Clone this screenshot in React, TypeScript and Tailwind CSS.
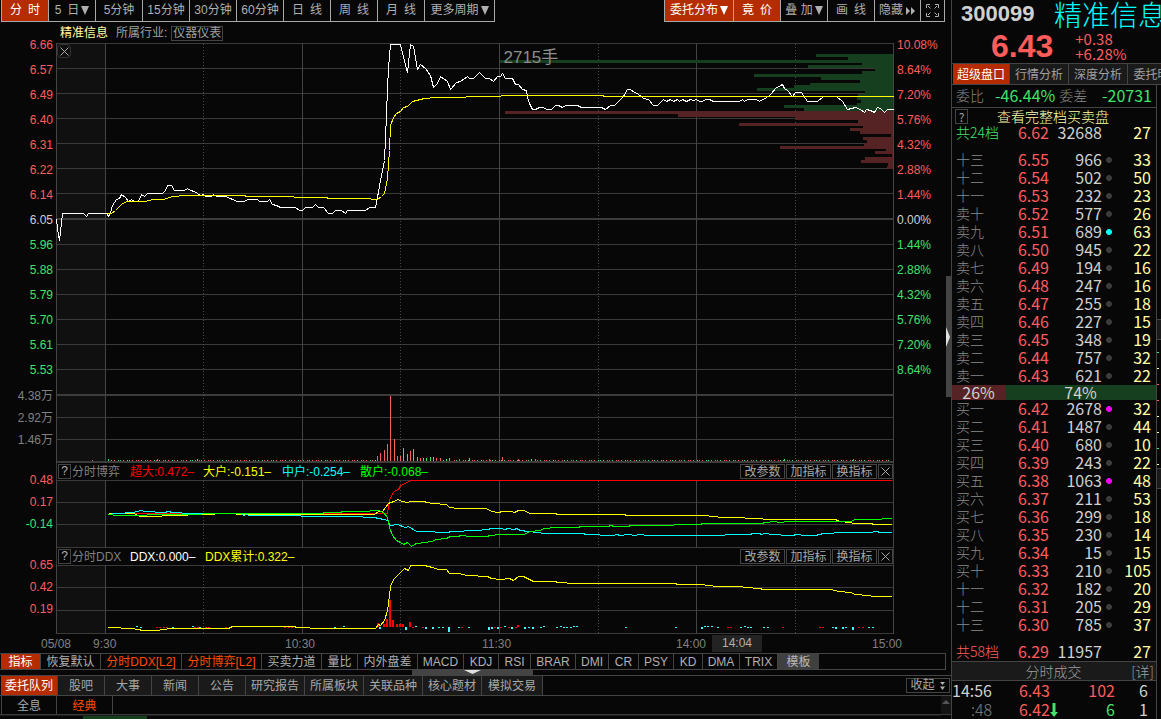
import React from "react";

type Pt = string;

const RED = "#ff5c5c";
const GREEN = "#3fe36b";

const PERIODS = ["5分钟", "15分钟", "30分钟", "60分钟", "日\u2002线", "周\u2002线", "月\u2002线"];

const PRICE_AXIS = ["6.66", "6.57", "6.49", "6.40", "6.31", "6.22", "6.14", "6.05", "5.96", "5.88", "5.79", "5.70", "5.61", "5.53"];
const PERCENT_AXIS = ["10.08%", "8.64%", "7.20%", "5.76%", "4.32%", "2.88%", "1.44%", "0.00%", "1.44%", "2.88%", "4.32%", "5.76%", "7.20%", "8.64%"];
const VOLUME_AXIS = ["4.38万", "2.92万", "1.46万"];

const SOLID_X = [56, 105, 302, 499, 696, 893];
const DOTTED_X = [203, 400, 598, 795];

const PRICE_LINE: Pt =
  "56,219 57,228 59,240 61,222 62,213 83,213 86,216 88,213 106,213 108,216 110,212 112,205 116,199 119,198 121,194 125,197 128,201 131,199 134,201 138,201 141,194 144,196 147,193 162,193 165,190 167,185 171,185 174,190 184,190 187,188 190,190 194,191 200,195 203,194 205,196 211,196 213,194 216,196 226,196 229,198 233,199 236,201 244,201 247,199 257,199 259,201 267,201 269,199 272,204 276,205 280,207 295,207 299,210 302,210 305,207 312,207 315,204 318,207 323,207 328,213 332,213 335,210 341,210 345,213 347,210 365,210 369,207 375,207 377,197 380,180 384,160 386,115 387,87 388,68 390,44 400,44 403,57 407,72 410,44 413,46 417,69 420,64 425,68 430,75 433,87 437,83 440,76 447,81 450,89 456,82 460,81 467,76 469,78 473,78 479,72 485,78 489,78 493,81 497,76 500,76 502,73 505,78 512,78 515,84 518,84 522,89 526,90 527,97 529,103 532,109 535,109 539,107 543,107 546,109 551,109 555,105 558,105 562,107 565,105 577,105 581,107 601,107 605,109 610,105 614,105 619,100 623,96 627,89 630,89 634,92 637,93 643,98 648,99 653,105 657,105 663,99 666,101 670,99 673,101 677,99 679,101 682,99 686,101 690,99 693,100 696,99 699,101 702,101 705,99 709,99 713,101 739,101 742,99 744,101 747,99 756,99 759,101 762,99 767,97 771,93 775,88 782,84 784,88 787,90 792,96 795,92 801,92 807,101 817,101 823,96 836,96 842,101 847,109 855,107 860,109 864,112 866,109 870,110 874,112 877,107 880,108 884,112 887,109 893,109";
const AVERAGE_LINE: Pt =
  "106,213 111,213 115,210 121,204 126,201 145,201 152,199 163,199 172,196 186,195 244,195 246,196 292,196 295,197 326,197 328,198 369,198 372,199 377,199 381,196 384,193 387,178 389,150 390,125 393,117 396,113 400,111 403,107 407,106 412,101 424,98 436,97 465,97 466,96 500,96 501,95 602,95 604,96 893,96";

const DEPTH_TOP = 54;
const DEPTH_STEP = 2.86;
const SELL_DEPTH = [816, 848, 500, 862, 808, 875, 862, 754, 821, 860, 810, 794, 757, 865, 858, 857, 861, 857, 784, 804];
const BUY_DEPTH = [505, 678, 795, 858, 739, 863, 850, 860, 891, 863, 867, 864, 780, 886, 875, 892, 865, 861, 888, 887];

const VOLUME: [number, number, "r" | "g"][] = [
  [92, 1, "r"], [108, 2, "g"], [157, 2, "r"], [197, 2, "g"], [377, 5, "r"], [380, 8, "r"], [384, 11, "r"], [387, 17, "r"], [390, 65, "r"],
  [394, 22, "r"], [397, 5, "r"], [400, 5, "r"], [403, 13, "g"], [407, 7, "g"], [410, 10, "r"], [413, 12, "g"], [417, 4, "g"], [420, 3, "r"],
  [423, 3, "g"], [426, 3, "g"], [430, 4, "g"], [433, 4, "g"], [436, 3, "r"], [440, 3, "r"], [443, 1, "g"], [446, 2, "g"], [449, 3, "g"],
  [459, 2, "r"], [469, 3, "g"], [489, 2, "r"], [502, 4, "r"], [518, 2, "r"], [531, 2, "g"], [535, 2, "r"], [784, 2, "g"], [853, 2, "r"],
];

const MINOR_VOLUME = Array.from({ length: 260 }, (_, i) => 111 + i * 3)
  .filter((x) => (x < 376 || x > 452) && x < 889)
  .map((x, i) => ({ x: x + (i % 3 === 2 ? 1 : 0), green: i % 4 === 2 || i % 11 === 5 || i % 17 === 3 }));

const GAME_RED: Pt = "108,513 387,513 389,500 392,493 395,490 398,489 400,485 405,483 410,480 891,480";
const GAME_YELLOW: Pt =
  "108,513 133,513 140,516 158,516 165,515 175,515 200,514 230,513 240,514 374,514 378,511 382,511 385,507 388,503 390,502 394,501 397,499 402,501 407,502 410,501 424,501 426,502 433,503 446,504 449,507 458,508 486,508 491,511 498,512 502,511 511,511 514,512 518,510 523,510 530,513 555,513 557,514 624,514 626,515 700,515 716,516 719,517 743,517 746,518 761,518 764,519 835,519 839,521 850,522 853,523 871,523 873,524 891,524";
const GAME_CYAN: Pt =
  "108,514 116,513 133,512 140,510 145,511 164,512 168,511 172,512 190,513 240,513 243,515 246,514 249,515 350,516 374,517 378,518 384,519 387,520 390,525 397,524 405,527 408,526 416,531 433,531 436,532 448,532 450,531 477,530 487,529 491,528 500,528 505,529 507,528 514,529 516,528 520,530 536,532 544,533 583,533 585,534 613,535 616,534 620,535 627,534 635,535 638,534 648,535 723,535 726,534 749,534 753,533 759,533 761,534 764,533 773,534 787,535 793,535 795,534 806,535 815,535 823,533 845,532 870,532 875,531 881,532 891,532";
const GAME_GREEN: Pt =
  "108,514 117,515 145,515 148,514 165,514 240,513 322,513 324,512 340,512 342,511 368,511 371,510 378,510 383,512 387,517 389,527 392,535 396,540 400,542 403,544 407,542 411,546 416,543 425,542 431,541 436,539 446,538 450,536 458,536 460,535 470,536 487,536 489,535 500,534 523,534 530,531 539,530 544,528 556,527 578,527 580,526 608,526 610,525 614,526 628,526 630,525 672,525 675,524 700,524 702,523 762,523 764,522 775,521 778,522 790,521 850,521 855,519 880,519 883,518 891,518";

const DDX_LINE: Pt =
  "108,627 132,628 137,629 143,630 158,630 161,629 172,628 228,628 232,626 294,626 296,627 322,628 375,628 378,624 380,625 384,620 387,610 389,595 390,586 393,579 400,572 404,568 408,570 410,565 424,565 432,567 438,569 446,569 449,573 458,573 467,575 487,576 491,578 500,579 509,578 513,580 518,576 523,576 533,581 555,581 557,582 575,583 675,583 677,584 700,584 717,586 740,586 745,587 760,588 762,589 831,589 838,591 850,592 855,594 868,595 873,596 891,596";
const DDX_UP: [number, number][] = [[377, 4], [383, 3], [386, 8], [389, 27], [392, 7], [396, 3], [399, 3], [402, 3], [409, 5], [517, 2]];
const DDX_RED_DOTS = [156, 159, 163, 166, 194, 197, 205, 208, 225, 284, 288, 291, 412, 422, 461, 494, 500, 508, 515, 727, 730, 782, 819, 822, 858, 862];
const DDX_CYAN_DOTS: [number, number, number][] = [
  [136, 626, 1], [140, 627, 1], [172, 627, 1], [192, 626, 1], [199, 627, 1], [334, 627, 1], [343, 626, 1], [379, 627, 2], [405, 627, 3],
  [415, 626, 1], [425, 627, 2], [432, 627, 2], [438, 627, 1], [442, 627, 1], [448, 627, 5], [458, 627, 1], [468, 627, 1], [488, 627, 3],
  [491, 627, 2], [497, 627, 2], [504, 626, 1], [511, 627, 2], [524, 627, 2], [528, 627, 1], [532, 627, 2], [540, 627, 1], [543, 626, 1],
  [556, 627, 1], [560, 626, 1], [563, 627, 1], [566, 627, 1], [570, 627, 1], [573, 626, 1], [576, 626, 1], [625, 627, 1], [675, 627, 1],
  [701, 627, 2], [704, 626, 1], [707, 626, 1], [711, 626, 1], [717, 627, 1], [740, 627, 1], [744, 626, 1], [747, 627, 1], [750, 627, 1],
  [763, 627, 1], [767, 627, 1], [832, 627, 1], [835, 627, 2], [842, 627, 2], [845, 627, 1], [852, 627, 3], [868, 627, 1], [872, 627, 1],
];

const INDICATORS: [string, string, string][] = [
  ["恢复默认", "w-[60px]", "text-[#b0b0b0]"],
  ["分时DDX[L2]", "w-[81px]", "text-[#ff4a00]"],
  ["分时博弈[L2]", "w-20", "text-[#ff4a00]"],
  ["买卖力道", "w-[60px]", "text-[#b0b0b0]"],
  ["量比", "w-9", "text-[#b0b0b0]"],
  ["内外盘差", "w-[60px]", "text-[#b0b0b0]"],
  ["MACD", "w-[46px]", "text-[#b0b0b0]"],
  ["KDJ", "w-[35px]", "text-[#b0b0b0]"],
  ["RSI", "w-8", "text-[#b0b0b0]"],
  ["BRAR", "w-[45px]", "text-[#b0b0b0]"],
  ["DMI", "w-[33px]", "text-[#b0b0b0]"],
  ["CR", "w-[30px]", "text-[#b0b0b0]"],
  ["PSY", "w-[35px]", "text-[#b0b0b0]"],
  ["KD", "w-[29px]", "text-[#b0b0b0]"],
  ["DMA", "w-[37px]", "text-[#b0b0b0]"],
  ["TRIX", "w-[38px]", "text-[#b0b0b0]"],
];

const NEWS_TABS: [string, string][] = [
  ["股吧", "w-[47px]"],
  ["大事", "w-[47px]"],
  ["新闻", "w-[47px]"],
  ["公告", "w-[47px]"],
  ["研究报告", "w-[59px]"],
  ["所属板块", "w-[59px]"],
  ["关联品种", "w-[59px]"],
  ["核心题材", "w-[59px]"],
  ["模拟交易", "w-[61px]"],
];

type Row = [string, string, string, string, string?];
const SELLS: Row[] = [
  ["十三", "6.55", "966", "33"], ["十二", "6.54", "502", "50"], ["十一", "6.53", "232", "23"], ["卖十", "6.52", "577", "26"],
  ["卖九", "6.51", "689", "63", "#00ffff"], ["卖八", "6.50", "945", "22"], ["卖七", "6.49", "194", "16"], ["卖六", "6.48", "247", "16"],
  ["卖五", "6.47", "255", "18"], ["卖四", "6.46", "227", "15"], ["卖三", "6.45", "348", "19"], ["卖二", "6.44", "757", "32"],
  ["卖一", "6.43", "621", "22"],
];
const BUYS: Row[] = [
  ["买一", "6.42", "2678", "32", "#ff00ff"], ["买二", "6.41", "1487", "44"], ["买三", "6.40", "680", "10"], ["买四", "6.39", "243", "22"],
  ["买五", "6.38", "1063", "48", "#ff00ff"], ["买六", "6.37", "211", "53"], ["买七", "6.36", "299", "18"], ["买八", "6.35", "230", "14"],
  ["买九", "6.34", "15", "15"], ["买十", "6.33", "210", "105"], ["十一", "6.32", "182", "20"], ["十二", "6.31", "205", "29"],
  ["十三", "6.30", "785", "37"],
];

function Down() {
  return (
    <svg width="8" height="9" viewBox="0 0 8 9" fill="currentColor" className="shrink-0">
      <path d="M0 0h8L4 9z" />
    </svg>
  );
}

function ToolButton({ children, className = "w-[47px]", active = false }: { children: React.ReactNode; className?: string; active?: boolean }) {
  return (
    <button
      className={`flex h-[22px] shrink-0 items-center justify-center gap-0.5 border-r border-b border-[#a8a8a8] leading-[21px] whitespace-nowrap ${className} ${
        active ? "bg-[#b42c00] text-white" : "text-[#b0b0b0]"
      }`}
    >
      {children}
    </button>
  );
}

function Polyline({ points, color }: { points: Pt; color: string }) {
  return <polyline points={points} fill="none" stroke={color} strokeWidth="1" transform="translate(0.5 0.5)" vectorEffect="non-scaling-stroke" />;
}

function Pane({ top, height, lines, thick = [], className, label, children }: {
  top: number;
  height: number;
  lines: number[];
  thick?: number[];
  className: string;
  label: string;
  children: React.ReactNode;
}) {
  return (
    <svg
      role="img"
      aria-label={label}
      viewBox={`56 ${top} 838 ${height}`}
      preserveAspectRatio="none"
      shapeRendering="crispEdges"
      className={`block w-full ${className}`}
    >
      <rect x="57" y={top} width="48" height={height} fill="#101010" />
      {lines.map((y) => (
        <rect key={y} x="56" y={y} width="838" height="1" fill="#3a3a3a" />
      ))}
      {thick.map((y) => (
        <rect key={y} x="56" y={y} width="838" height="2" fill="#3c3c3c" />
      ))}
      {SOLID_X.map((x) => (
        <rect key={x} x={x} y={top} width="1" height={height} fill="#444444" />
      ))}
      {DOTTED_X.map((x) => (
        <line key={x} x1={x + 0.5} x2={x + 0.5} y1={top + 1} y2={top + height} stroke="#4a4a4a" strokeDasharray="1 2" />
      ))}
      {children}
    </svg>
  );
}

function Cross() {
  return (
    <svg width="9" height="9" viewBox="0 0 9 9" stroke="#a8a8a8" fill="none">
      <path d="M0.5 0.5l8 8M8.5 0.5l-8 8" />
    </svg>
  );
}

function PaneHeader({ name, children }: { name: string; children: React.ReactNode }) {
  return (
    <div className="flex h-[17px] items-center justify-between border-x border-[#3a3a3a] pl-px leading-[15px] whitespace-nowrap">
      <div className="flex items-center">
        <button aria-label="帮助" className="flex h-[15px] w-[13px] items-center justify-center border border-[#444] text-[#b0b0b0]">?</button>
        <span className="w-[59px] pt-px pl-px text-[#808080]">{name}</span>
        <div className="flex pt-px">{children}</div>
      </div>
      <div className="flex gap-px text-[#a8a8a8]">
        {["改参数", "加指标", "换指标"].map((t) => (
          <button key={t} className="h-[15px] w-[45px] border border-[#444] leading-[15px]">{t}</button>
        ))}
        <button aria-label="关闭" className="flex h-[15px] w-[15px] items-center justify-center border border-[#444]"><Cross /></button>
      </div>
    </div>
  );
}

function QuoteRow({ row, total }: { row: Row; total?: string }) {
  const [label, price, volume, count, dot] = row;
  return (
    <tr className="h-[18px]">
      <th scope="row" className={`p-0 pl-1 text-left align-top text-sm leading-4 font-light whitespace-nowrap ${total ?? "text-[#8a8a8a]"}`}>{label}</th>
      <td className="p-0 text-right align-top text-[#ff5c5c]">{price}</td>
      <td className="p-0 text-right align-top text-[#d0d0d0]">{volume}</td>
      <td className="p-0 align-middle">
        {!total && (
          <svg width="6" height="6" viewBox="0 0 6 6" className="mx-auto block">
            <path d="M2 0h2l2 2v2l-2 2h-2l-2-2v-2z" fill={dot ?? "#3c3c3c"} />
          </svg>
        )}
      </td>
      <td className="p-0 pr-[5px] text-right align-top text-[#ffffa6]">{count}</td>
    </tr>
  );
}

function QuoteTable({ label, children }: { label: string; children: React.ReactNode }) {
  return (
    <table aria-label={label} className="w-full table-fixed border-collapse text-base leading-4">
      <colgroup>
        <col className="w-[51px]" />
        <col className="w-[46px]" />
        <col className="w-[53px]" />
        <col className="w-[14px]" />
        <col />
      </colgroup>
      <tbody>{children}</tbody>
    </table>
  );
}

function AxisLabel({ text, className }: { text: string; className: string }) {
  return <div className={`flex items-center ${className}`}>{text}</div>;
}

function LeftAxis() {
  return (
    <div className="w-14 shrink-0 pt-[9px] pr-[3px] text-[#808080]">
      {PRICE_AXIS.map((t, i) => (
        <AxisLabel key={t} text={t} className={`h-[25px] justify-end ${i < 7 ? "text-[#ff5c5c]" : i === 7 ? "text-[#d0d0d0]" : "text-[#3fe36b]"}`} />
      ))}
      <div className="pt-[3px]">
        {VOLUME_AXIS.map((t) => (
          <AxisLabel key={t} text={t} className="h-[22px] justify-end" />
        ))}
      </div>
      <div className="pt-[18px] text-[#ff5c5c]">
        <AxisLabel text="0.48" className="h-[22px] justify-end" />
        <AxisLabel text="0.17" className="h-[22px] justify-end" />
        <AxisLabel text="-0.14" className="h-[22px] justify-end text-[#3fe36b]" />
      </div>
      <div className="pt-[19px] text-[#ff5c5c]">
        {["0.65", "0.42", "0.19"].map((t) => (
          <AxisLabel key={t} text={t} className="h-[22px] justify-end" />
        ))}
      </div>
    </div>
  );
}

function RightAxis() {
  return (
    <div className="w-[57px] shrink-0 pt-[9px] pl-[3px]">
      {PERCENT_AXIS.map((t, i) => (
        <AxisLabel key={i} text={t} className={`h-[25px] ${i < 7 ? "text-[#ff5c5c]" : i === 7 ? "text-[#d0d0d0]" : "text-[#3fe36b]"}`} />
      ))}
    </div>
  );
}

function Charts() {
  return (
    <div className="min-w-0 flex-1">
      <div className="flex h-5 items-center gap-2 pl-1 leading-[15px] whitespace-nowrap">
        <span className="text-[#ffffa6]">精准信息</span>
        <span className="flex items-center gap-1 text-[#a0a0a0]">
          所属行业:
          <a href="#industry" className="border border-[#444] px-px leading-[13px]">仪器仪表</a>
        </span>
      </div>

      <div className="relative">
        <Pane
          label="分时走势"
          top={43}
          height={420}
          className="h-[420px]"
          lines={[43, 68, 93, 118, 143, 168, 193, 244, 269, 294, 319, 344, 369, 417, 439]}
          thick={[218, 394, 461]}
        >
          {SELL_DEPTH.map((x, i) => (
            <rect key={i} x={x} y={Math.round(DEPTH_TOP + i * DEPTH_STEP)} width={893 - x} height="3" fill="#153f1f" />
          ))}
          {BUY_DEPTH.map((x, i) => (
            <rect key={i} x={x} y={Math.round(DEPTH_TOP + (i + 20) * DEPTH_STEP)} width={893 - x} height="3" fill="#552323" />
          ))}
          <Polyline points={PRICE_LINE} color="#ffffff" />
          <Polyline points={AVERAGE_LINE} color="#ffff00" />
          {MINOR_VOLUME.map(({ x, green }) => (
            <rect key={x} x={x} y="460" width="1" height="1" fill={green ? GREEN : RED} />
          ))}
          {VOLUME.map(([x, h, c]) => (
            <rect key={x} x={x} y={461 - h} width="1" height={h} fill={c === "g" ? GREEN : RED} />
          ))}
        </Pane>
        <button aria-label="关闭走势" className="absolute top-px left-px flex h-3.5 w-3.5 items-center justify-center rounded-sm border border-[#333]"><Cross /></button>
        <span className="absolute top-1 left-[53.4%] text-[17px] leading-[22px] text-[#8c8c8c]">2715手</span>
      </div>

      <PaneHeader name="分时博弈">
        <span className="w-[73px] text-[#ff0000]">超大:0.472–</span>
        <span className="w-[79px] text-[#ffff00]">大户:-0.151–</span>
        <span className="w-[78px] text-[#00ffff]">中户:-0.254–</span>
        <span className="text-[#00ff00]">散户:-0.068–</span>
      </PaneHeader>
      <Pane label="分时博弈" top={480} height={68} className="h-[68px]" lines={[480, 502, 524, 547]}>
        <Polyline points={GAME_RED} color="#ff0000" />
        <Polyline points={GAME_YELLOW} color="#ffff00" />
        <Polyline points={GAME_CYAN} color="#00ffff" />
        <Polyline points={GAME_GREEN} color="#00ff00" />
      </Pane>

      <PaneHeader name="分时DDX">
        <span className="w-[75px] text-white">DDX:0.000–</span>
        <span className="text-[#ffff00]">DDX累计:0.322–</span>
      </PaneHeader>
      <Pane label="分时DDX" top={565} height={69} className="h-[69px]" lines={[565, 587, 610, 633]}>
        {DDX_UP.map(([x, h]) => (
          <rect key={x} x={x} y={627 - h} width="2" height={h} fill="#ff0000" />
        ))}
        {DDX_RED_DOTS.map((x) => (
          <rect key={x} x={x} y="627" width="2" height="1" fill="#e01010" />
        ))}
        {DDX_CYAN_DOTS.map(([x, y, h]) => (
          <rect key={x} x={x} y={y} width="2" height={h} fill="#40ffff" />
        ))}
        <Polyline points={DDX_LINE} color="#ffff00" />
      </Pane>
    </div>
  );
}

function TimeAxis() {
  return (
    <div className="flex h-[19px] items-center pl-[41px] whitespace-nowrap text-[#808080]">
      <span className="min-w-0 grow-[52] basis-0">05/08</span>
      <span className="min-w-0 grow-[192] basis-0">9:30</span>
      <span className="min-w-0 grow-[197] basis-0">10:30</span>
      <span className="min-w-0 grow-[194] basis-0">11:30</span>
      <span className="min-w-0 grow-[36] basis-0">14:00</span>
      <span className="min-w-0 grow-[50] basis-0 bg-[#232323] text-center leading-[17px] text-[#b0b0b0]">14:04</span>
      <span className="min-w-0 grow-[110] basis-0" />
      <span className="min-w-0 grow-[79] basis-0">15:00</span>
    </div>
  );
}

function BottomBars() {
  return (
    <>
      <div className="mr-[5px] flex h-[17px] items-stretch border-y border-r border-[#444] leading-[17px] whitespace-nowrap">
        <button className="ml-px w-10 shrink-0 border-r border-[#444] bg-[#b42c00] text-white">指标</button>
        {INDICATORS.map(([t, w, c]) => (
          <button key={t} className={`shrink-0 border-r border-[#444] ${w} ${c}`}>{t}</button>
        ))}
        <button className="w-[41px] shrink-0 bg-[#404040] text-[#b8b8b8]">模板</button>
      </div>
      <div className="flex h-[5px] justify-center pr-1.5">
        <div className="flex w-[121px] justify-center bg-[#444]">
          <svg width="17" height="4" viewBox="0 0 17 4" fill="#e0e0e0"><path d="M0 0h17L8.500 4z" /></svg>
        </div>
      </div>
      <div className="flex h-[21px] items-center border-y border-[#444] leading-[21px] whitespace-nowrap text-[#a8a8a8]">
        <button className="ml-px h-full w-[57px] shrink-0 border-r border-[#444] bg-[#b42c00] text-white">委托队列</button>
        {NEWS_TABS.map(([t, w]) => (
          <button key={t} className={`h-full shrink-0 border-r border-[#444] bg-[#1a1a1a] ${w}`}>{t}</button>
        ))}
        <button className="mr-px ml-auto flex h-[15px] w-11 items-center justify-center gap-1 border border-[#444] leading-[15px]">
          收起
          <svg width="7" height="8" viewBox="0 0 7 8" fill="#b0b0b0"><path d="M1 0h5L3.500 3zM1 4.500h5L3.500 8z" /></svg>
        </button>
      </div>
      <div className="flex grow flex-col">
        <div className="flex h-[19px] items-stretch border-b border-[#3a3a3a] pl-px leading-5 text-[#a8a8a8]">
          <button className="w-14 border-x border-[#444]">全息</button>
          <button className="w-14 border-r border-[#444] text-[#ff4a00]">经典</button>
          <div className="ml-auto flex w-2.5 justify-center bg-[#141414] pt-1">
            <svg width="8" height="4" viewBox="0 0 8 4" fill="#555"><path d="M4 0l4 4h-8z" /></svg>
          </div>
        </div>
        <div className="mr-2.5 flex grow border-t border-[#1c1c1c] pl-[83px]">
          <div className="w-16 bg-[#153f1f]" />
        </div>
      </div>
    </>
  );
}

function QuotePanel() {
  return (
    <aside className="flex w-[210px] shrink-0 flex-col overflow-hidden border-l border-[#444] font-['Noto_Sans_CJK_SC','Liberation_Sans',sans-serif]">
      <header className="h-[63px] shrink-0 whitespace-nowrap">
        <div className="flex h-7 items-center pl-[9px]">
          <span className="w-[93px] shrink-0 font-['Liberation_Sans',sans-serif] text-[22px] leading-7 font-bold text-[#d0d0d0]">300099</span>
          <h1 className="shrink-0 text-[28px] leading-7 font-light text-[#00ffff]">精准信息</h1>
        </div>
        <div className="flex h-[35px] items-center gap-[22px] pl-[39px] text-[#ff5c5c]">
          <span className="font-['Liberation_Sans',sans-serif] text-[32px] leading-8 font-bold">6.43</span>
          <span className="flex flex-col text-[15px] leading-[15px]">
            <span>+0.38</span>
            <span>+6.28%</span>
          </span>
        </div>
      </header>
      <nav className="flex h-[22px] shrink-0 border-y border-[#444] pl-px text-xs whitespace-nowrap text-[#a0a0a0]">
        <button className="w-[57px] shrink-0 border-r border-[#444] bg-[#b42c00] text-white">超级盘口</button>
        <button className="w-[59px] shrink-0 border-r border-[#444] bg-[#1a1a1a]">行情分析</button>
        <button className="w-[59px] shrink-0 border-r border-[#444] bg-[#1a1a1a]">深度分析</button>
        <button className="w-[59px] shrink-0 bg-[#1a1a1a]">委托明细</button>
      </nav>
      <div className="flex grow">
        <div className="min-w-0 flex-1 border-r border-[#444]">
          <div className="flex h-[23px] items-start border-b border-[#444] px-1 text-sm leading-[21px] whitespace-nowrap text-[#8a8a8a]">
            <span className="font-light">委比</span>
            <span className="ml-[11px] text-base leading-[21px] text-[#3fe36b]">-46.44%</span>
            <span className="ml-1 font-light">委差</span>
            <span className="ml-auto text-base leading-[21px] text-[#3fe36b]">-20731</span>
          </div>
          <div className="flex h-4 items-center pl-[3px]">
            <button aria-label="说明" className="flex h-[15px] w-[13px] items-center justify-center border border-[#444] text-xs leading-[13px] text-[#a0a0a0]">?</button>
            <a href="#orders" className="ml-[29px] text-sm leading-4 font-light text-[#ffffa6]">查看完整档买卖盘</a>
          </div>
          <QuoteTable label="卖盘合计">
            <QuoteRow row={["共24档", "6.62", "32688", "27"]} total="text-[#3fe36b]" />
          </QuoteTable>
          <div className="pt-[9px]">
            <QuoteTable label="卖盘">
              {SELLS.map((r) => <QuoteRow key={r[1]} row={r} />)}
            </QuoteTable>
          </div>
          <div className="flex h-[15px] text-center text-base leading-[15px] text-[#d0d0d0]">
            <div className="w-[26%] bg-[#552323]">26%</div>
            <div className="w-[74%] bg-[#153f1f]">74%</div>
          </div>
          <QuoteTable label="买盘">
            {BUYS.map((r) => <QuoteRow key={r[1]} row={r} />)}
          </QuoteTable>
          <div className="pt-[9px]">
            <QuoteTable label="买盘合计">
              <QuoteRow row={["共58档", "6.29", "11957", "27"]} total="text-[#ff5c5c]" />
            </QuoteTable>
          </div>
          <div className="flex h-5 items-center border-y border-[#444] bg-[#1a1a1a] pr-0.5 text-sm leading-[18px] font-light text-[#a0a0a0]">
            <h2 className="grow pl-6 text-center">分时成交</h2>
            <a href="#trades">[详]</a>
          </div>
          <table aria-label="分时成交" className="w-full table-fixed text-base leading-[19px]">
            <colgroup>
              <col className="w-[42px]" />
              <col className="w-[64px]" />
              <col className="w-[57px]" />
              <col />
            </colgroup>
            <tbody>
              <tr className="h-[19px]">
                <td className="p-0 text-[#d0d0d0]">14:56</td>
                <td className="p-0 pr-2 text-right text-[#ff5c5c]">6.43</td>
                <td className="p-0 text-right text-[#ff5c5c]">102</td>
                <td className="p-0 pr-2 text-right text-[#d0d0d0]">6</td>
              </tr>
              <tr className="h-[19px]">
                <td className="p-0 pr-0.5 text-right font-light text-[#808080]">:48</td>
                <td className="p-0 text-[#ff5c5c]">
                  <span className="flex items-center justify-end">
                    6.42
                    <svg width="8" height="14" viewBox="0 0 8 14" fill={GREEN}><path d="M2.500 0h3v9h2.500L4 14L0 9h2.500z" /></svg>
                  </span>
                </td>
                <td className="p-0 text-right text-[#3fe36b]">6</td>
                <td className="p-0 pr-2 text-right text-[#d0d0d0]">1</td>
              </tr>
            </tbody>
          </table>
        </div>
        <svg width="4" height="634" viewBox="1157 85 4 634" shapeRendering="crispEdges" className="shrink-0">
          <rect x="1157" y="319" width="4" height="20" fill="#1a1a1a" />
          <rect x="1157" y="468" width="4" height="20" fill="#1a1a1a" />
          {[319, 339, 468, 488].map((y) => <rect key={y} x="1157" y={y} width="4" height="1" fill="#444" />)}
          {[352, 448].map((y) => <rect key={y} x="1157" y={y} width="2" height="1" fill={GREEN} />)}
          {[384, 400].map((y) => <rect key={y} x="1157" y={y} width="2" height="1" fill={RED} />)}
          {[368, 416, 432, 464].map((y) => <rect key={y} x="1157" y={y} width="2" height="1" fill="#ffffa6" />)}
        </svg>
      </div>
    </aside>
  );
}

export default function App() {
  return (
    <div className="flex h-screen overflow-hidden bg-[#070707] font-['Liberation_Sans','Noto_Sans_CJK_SC',sans-serif] text-xs">
      <main className="relative flex min-w-0 flex-1 flex-col">
        <div className="flex h-[23px] shrink-0 justify-between pr-1.5 pl-px">
          <div className="flex">
            <ToolButton active className="w-12 border-l">分{"\u2002"}时</ToolButton>
            <ToolButton>5{"\u2002"}日<Down /></ToolButton>
            {PERIODS.map((t) => <ToolButton key={t}>{t}</ToolButton>)}
            <ToolButton className="w-[70px]">更多周期<Down /></ToolButton>
          </div>
          <div className="flex">
            <ToolButton active className="w-[70px] border-l">委托分布<Down /></ToolButton>
            <ToolButton active>竟{"\u2002"}价</ToolButton>
            <ToolButton>叠 加<Down /></ToolButton>
            <ToolButton>画{"\u2002"}线</ToolButton>
            <ToolButton className="w-[46px]">
              隐藏
              <svg width="11" height="8" viewBox="0 0 11 8" fill="currentColor"><path d="M1 0l4 4-4 4zM6 0l4 4-4 4z" /></svg>
            </ToolButton>
            <ToolButton className="w-6">
              <svg role="img" aria-label="全屏" width="13" height="13" viewBox="0 0 13 13" fill="none" stroke="currentColor">
                <path d="M0.500 4V0.500H4M9 0.500h3.500V4M12.500 9v3.500H9M4 12.500H0.500V9M2 2l2.500 2.500M11 2L8.500 4.500M11 11L8.500 8.500M2 11l2.500-2.500" />
              </svg>
            </ToolButton>
          </div>
        </div>
        <div className="flex shrink-0">
          <LeftAxis />
          <Charts />
          <RightAxis />
        </div>
        <TimeAxis />
        <BottomBars />
        <div className="absolute top-[276px] right-0 flex h-[121px] w-[5px] items-center bg-[#444]">
          <svg width="4" height="20" viewBox="0 0 4 20" fill="#e0e0e0"><path d="M0 0L4 10L0 20z" /></svg>
        </div>
      </main>
      <QuotePanel />
    </div>
  );
}
